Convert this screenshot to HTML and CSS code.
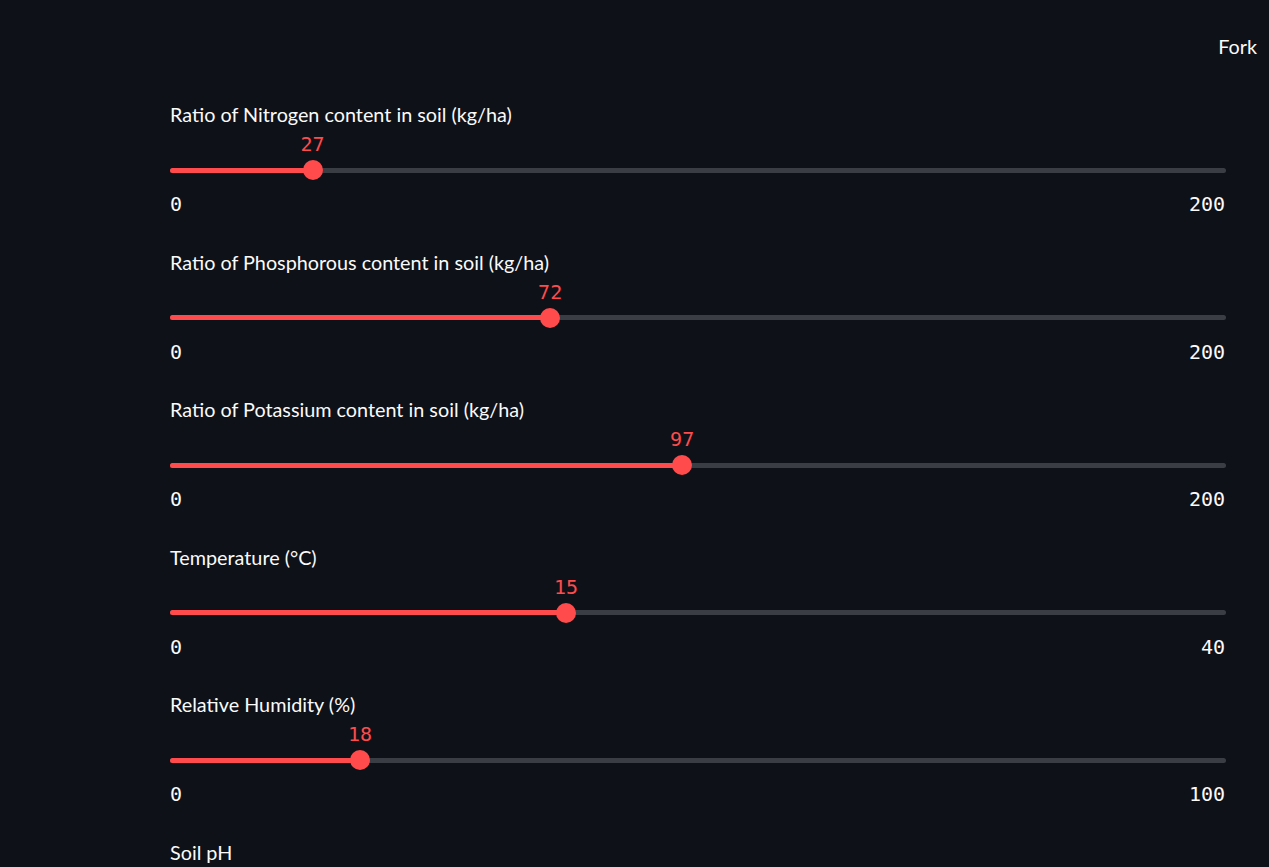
FILE: index.html
```html
<!DOCTYPE html>
<html>
<head>
<meta charset="utf-8">
<link rel="stylesheet" href="styles.css">
</head>
<body>
<header class="topbar"><span class="fork">Fork</span></header>
<main class="main">
  <section class="slider">
    <div class="label">Ratio of Nitrogen content in soil (kg/ha)</div>
    <div class="rail" style="--p:13.5%">
      <div class="track"><div class="fill"></div></div>
      <div class="thumb"></div>
      <div class="value">27</div>
    </div>
    <div class="ticks"><span>0</span><span>200</span></div>
  </section>
  <section class="slider">
    <div class="label">Ratio of Phosphorous content in soil (kg/ha)</div>
    <div class="rail" style="--p:36%">
      <div class="track"><div class="fill"></div></div>
      <div class="thumb"></div>
      <div class="value">72</div>
    </div>
    <div class="ticks"><span>0</span><span>200</span></div>
  </section>
  <section class="slider">
    <div class="label">Ratio of Potassium content in soil (kg/ha)</div>
    <div class="rail" style="--p:48.5%">
      <div class="track"><div class="fill"></div></div>
      <div class="thumb"></div>
      <div class="value">97</div>
    </div>
    <div class="ticks"><span>0</span><span>200</span></div>
  </section>
  <section class="slider">
    <div class="label">Temperature (°C)</div>
    <div class="rail" style="--p:37.5%">
      <div class="track"><div class="fill"></div></div>
      <div class="thumb"></div>
      <div class="value">15</div>
    </div>
    <div class="ticks"><span>0</span><span>40</span></div>
  </section>
  <section class="slider">
    <div class="label">Relative Humidity (%)</div>
    <div class="rail" style="--p:18%">
      <div class="track"><div class="fill"></div></div>
      <div class="thumb"></div>
      <div class="value">18</div>
    </div>
    <div class="ticks"><span>0</span><span>100</span></div>
  </section>
  <section class="slider">
    <div class="label">Soil pH</div>
  </section>
</main>
</body>
</html>
```
FILE: styles.css
```css
html, body {
  margin: 0;
  padding: 0;
  background: #0e1117;
  color: #fafafa;
  overflow: hidden;
  height: 867px;
}
body {
  font-family: Lato, "Noto Sans", sans-serif;
}
.topbar {
  height: 94px;
  display: flex;
  justify-content: flex-end;
  align-items: flex-start;
  padding: 32px 12px 0 0;
  box-sizing: border-box;
}
.fork {
  font-size: 19.8px;
  line-height: 28px;
  color: #fafafa;
}
.main {
  width: 1056px;
  margin: 6px 0 0 170px;
  display: flex;
  flex-direction: column;
}
.slider {
  height: 147.5px;
  display: flex;
  flex-direction: column;
  flex-shrink: 0;
}
.label {
  font-size: 19.8px;
  line-height: 28px;
  height: 28px;
  color: #fafafa;
}
.rail {
  position: relative;
  height: 20px;
  margin-top: 32px;
}
.track {
  position: absolute;
  left: 0;
  right: 0;
  top: 7.5px;
  height: 5px;
  border-radius: 3px;
  background: #3b3d44;
  overflow: hidden;
}
.fill {
  width: var(--p);
  height: 100%;
  background: #ff4b4b;
}
.thumb {
  position: absolute;
  top: 0;
  left: var(--p);
  width: 20px;
  height: 20px;
  margin-left: -10px;
  border-radius: 50%;
  background: #ff4b4b;
}
.value {
  position: absolute;
  left: var(--p);
  bottom: 22px;
  transform: translateX(-50%);
  font-family: "DejaVu Sans Mono", "Liberation Mono", monospace;
  font-size: 20px;
  line-height: 28px;
  color: #ff4b4b;
  white-space: nowrap;
}
.ticks {
  margin-top: 10px;
  padding-right: 1px;
  display: flex;
  justify-content: space-between;
  font-family: "DejaVu Sans Mono", "Liberation Mono", monospace;
  font-size: 20px;
  line-height: 28px;
  color: #fafafa;
}
```
